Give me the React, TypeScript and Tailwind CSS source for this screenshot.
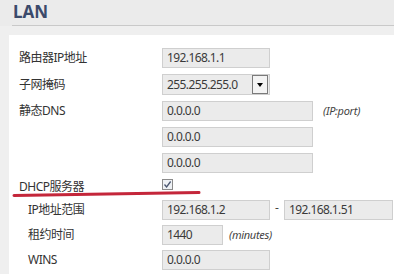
import React from 'react'

const FONT = '"Noto Sans", "Noto Sans CJK SC", sans-serif'

function Field({ value, w }: { value: string; w: string }) {
  return (
    <div className={`${w} h-full bg-[#ebebeb] border border-[#cfcfcf] flex items-center pl-[4px] text-[12px] tracking-[-0.6px] text-[#3a3a3a]`}>
      {value}
    </div>
  )
}

function Row({ label, indent, h = 'h-[20px]', children }: { label?: string; indent?: boolean; h?: string; children?: React.ReactNode }) {
  return (
    <div className={`flex items-center ${h}`}>
      <div className={`w-[143px] shrink-0 text-[12px] tracking-[-0.5px] text-[#333] ${indent ? 'pl-[9px]' : ''}`}>{label}</div>
      <div className="flex items-center h-full">{children}</div>
    </div>
  )
}

export default function App() {
  return (
    <div className="w-[394px] h-[274px] overflow-hidden relative bg-[#efefef]" style={{ fontFamily: FONT }}>
      {/* Header */}
      <div className="bg-[#ebebeb]">
        <div className="h-[25px] pl-[13px] pt-[1px] text-[17px] font-bold leading-[22px] text-[#3b4a6b]">LAN</div>
        <div className="ml-[12px] h-px bg-[#c9c9c9]" />
      </div>
      <div className="h-[9px]" />

      {/* Panel */}
      <div className="ml-[9px] bg-white h-[239px] pl-[10px] pt-[13px]">
        <div className="flex flex-col gap-[6px]">
          <Row label="路由器IP地址">
            <Field value="192.168.1.1" w="w-[108px]" />
          </Row>
          <Row label="子网掩码" h="h-[21px]">
            <div className="w-[108px] h-full bg-[#ebebeb] border border-[#cfcfcf] flex items-center pl-[4px] text-[12px] tracking-[-0.6px] text-[#3a3a3a] relative">
              255.255.255.0
              <div className="absolute right-[1px] top-[0px] bottom-[0px] w-[16px] border border-[#7a7a7a] bg-[#f3f3f3] flex items-center justify-center">
                <div className="w-0 h-0 border-l-[3px] border-r-[3px] border-t-[4px] border-l-transparent border-r-transparent border-t-black" />
              </div>
            </div>
          </Row>
          <Row label="静态DNS">
            <Field value="0.0.0.0" w="w-[151px]" />
            <span className="ml-[10px] text-[11px] italic text-[#444] tracking-[-0.3px]">(IP:port)</span>
          </Row>
          <Row>
            <Field value="0.0.0.0" w="w-[151px]" />
          </Row>
          <Row>
            <Field value="0.0.0.0" w="w-[151px]" />
          </Row>
        </div>

        <div className="mt-[2px] flex items-center h-[20px]">
          <div className="w-[143px] shrink-0 text-[12px] tracking-[-0.5px] text-[#333] pt-[4px]">DHCP服务器</div>
          <div className="w-[11px] h-[11px] border border-[#8b8b8b] bg-[#eef1f5] flex items-center justify-center -mt-[2px]">
            <svg width="9" height="9" viewBox="0 0 9 9">
              <path d="M1.5 4.5 L3.6 7 L7.6 1.5" fill="none" stroke="#4a5670" strokeWidth="1.3" />
            </svg>
          </div>
        </div>

        <div className="mt-[5px] flex flex-col gap-[5px]">
          <Row label="IP地址范围" indent>
            <Field value="192.168.1.2" w="w-[108px]" />
            <span className="w-[14px] text-center text-[12px] text-[#444] -mt-[4px]">-</span>
            <Field value="192.168.1.51" w="w-[109px]" />
          </Row>
          <Row label="租约时间" indent>
            <Field value="1440" w="w-[61px]" />
            <span className="ml-[6px] text-[11px] italic text-[#444] tracking-[-0.3px]">(minutes)</span>
          </Row>
          <Row label="WINS" indent>
            <Field value="0.0.0.0" w="w-[108px]" />
          </Row>
        </div>
      </div>

      {/* hand-drawn red underline */}
      <svg className="absolute left-0 top-0 pointer-events-none" width="394" height="274">
        <path d="M14 195.5 Q100 194.5 199 192.5" fill="none" stroke="#c4263a" strokeWidth="3" strokeLinecap="round" />
      </svg>
    </div>
  )
}
